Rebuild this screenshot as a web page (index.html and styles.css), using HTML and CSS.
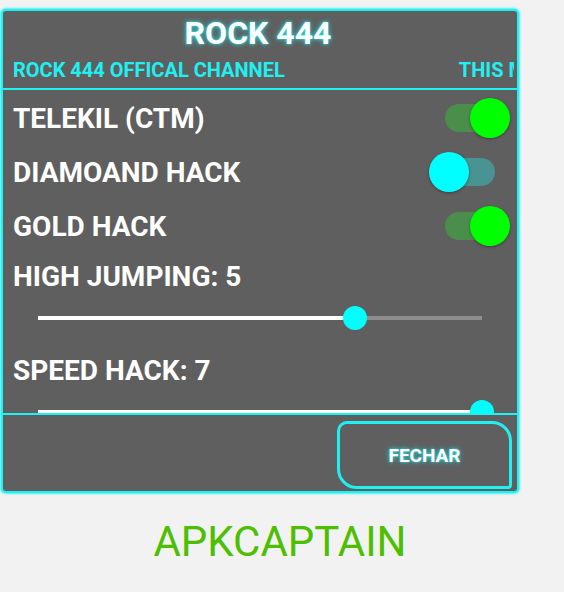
FILE: index.html
```html
<!DOCTYPE html>
<html>
<head>
<meta charset="utf-8">
<link rel="stylesheet" href="styles.css">
</head>
<body>
<div class="panel">
  <div class="header">
    <div class="title">ROCK 444</div>
    <div class="marquee"><span>ROCK 444 OFFICAL CHANNEL</span><span class="m2">THIS MOD IS MADE BY ROCK 444</span></div>
  </div>
  <div class="divider"></div>
  <div class="scroll">
    <div class="row">
      <span class="label">TELEKIL (CTM)</span>
      <span class="switch on"><span class="track"></span><span class="thumb"></span></span>
    </div>
    <div class="row">
      <span class="label">DIAMOAND HACK</span>
      <span class="switch off"><span class="track"></span><span class="thumb"></span></span>
    </div>
    <div class="row">
      <span class="label">GOLD HACK</span>
      <span class="switch on"><span class="track"></span><span class="thumb"></span></span>
    </div>
    <div class="slabel first">HIGH JUMPING: 5</div>
    <div class="slider"><div class="bar"><span class="fill" style="width:71.4%"></span><span class="knob" style="left:71.4%"></span></div></div>
    <div class="slabel second">SPEED HACK: 7</div>
    <div class="slider"><div class="bar"><span class="fill" style="width:100%"></span><span class="knob" style="left:100%"></span></div></div>
  </div>
  <div class="divider"></div>
  <div class="footer">
    <div class="btn">FECHAR</div>
  </div>
</div>
<div class="brand">APKCAPTAIN</div>
</body>
</html>
```
FILE: styles.css
```css
html, body {
  margin: 0;
  padding: 0;
  background: #f2f2f2;
  font-family: Roboto, "Liberation Sans", sans-serif;
}
.panel {
  margin: 9px 0 0 1px;
  width: 514px;
  height: 480px;
  border: 2px solid #1ff0f2;
  border-radius: 5px;
  background: #5f5f5f;
  box-shadow: 0 0 2px 1px rgba(31, 240, 242, 0.8);
  display: flex;
  flex-direction: column;
  overflow: hidden;
}
.header {
  padding: 4px 3px 0 10px;
  height: 77px;
  box-sizing: border-box;
  flex: none;
}
.title {
  text-align: center;
  color: #fff;
  font-weight: 700;
  font-size: 32px;
  line-height: 36px;
  text-shadow: 0 0 5px rgba(31, 240, 242, 0.9), 0 0 2px rgba(31, 240, 242, 0.7);
  padding-right: 11px;
}
.marquee {
  margin-top: 8px;
  color: #1ff0f2;
  font-weight: 700;
  font-size: 20px;
  line-height: 22px;
  white-space: nowrap;
  overflow: hidden;
}
.m2 {
  margin-left: 174px;
}
.divider {
  height: 2px;
  background: #1ff0f2;
  flex: none;
}
.scroll {
  height: 323px;
  overflow: hidden;
  padding-top: 1px;
  box-sizing: border-box;
  flex: none;
}
.row {
  height: 54px;
  display: flex;
  align-items: center;
  justify-content: space-between;
  padding: 0 7px 0 10px;
}
.label, .slabel {
  color: #fff;
  font-weight: 700;
  font-size: 28px;
}
.slabel {
  padding-left: 10px;
  height: 35px;
  line-height: 35px;
}
.slabel.first { margin-top: 6px; }
.slabel.second { margin-top: 11px; }
.switch {
  position: relative;
  width: 81px;
  height: 40px;
  display: block;
}
.track {
  position: absolute;
  left: 16px;
  top: 6px;
  width: 50px;
  height: 28px;
  border-radius: 14px;
}
.thumb {
  position: absolute;
  top: 0;
  width: 40px;
  height: 40px;
  border-radius: 50%;
  box-shadow: 0 1px 3px rgba(0,0,0,0.35);
}
.switch.on .track { background: #4b8e4b; }
.switch.on .thumb { right: 0; background: #00ff00; }
.switch.off .track { background: #4a9393; }
.switch.off .thumb { left: 0; background: #00ffff; }
.slider {
  height: 48px;
  display: flex;
  align-items: center;
  padding: 0 35px;
}
.bar {
  position: relative;
  flex: 1;
  height: 4px;
  background: #8e8e8e;
}
.fill {
  position: absolute;
  left: 0;
  top: 0;
  height: 4px;
  background: #fff;
}
.knob {
  position: absolute;
  top: -10px;
  width: 24px;
  height: 24px;
  margin-left: -12px;
  border-radius: 50%;
  background: #00ffff;
}
.footer {
  flex: 1;
  display: flex;
  justify-content: flex-end;
  align-items: flex-start;
  padding: 6px 5px 0 0;
}
.btn {
  width: 169px;
  height: 62px;
  border: 3px solid #1ff0f2;
  border-radius: 10px 20px 4px 20px;
  display: flex;
  align-items: center;
  justify-content: center;
  color: #fff;
  font-weight: 700;
  font-size: 19px;
  text-shadow: 0 0 5px rgba(31, 240, 242, 0.9), 0 0 2px rgba(31, 240, 242, 0.7);
}
.brand {
  margin-top: 24px;
  text-align: center;
  color: #4dbf00;
  font-size: 42px;
  padding-right: 4px;
}
```
